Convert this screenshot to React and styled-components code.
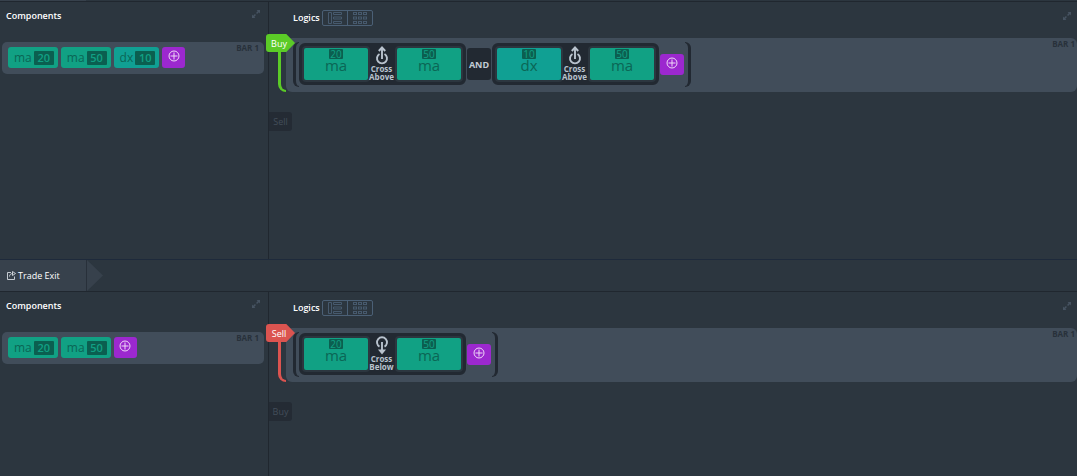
import React from "react";
import styled, { createGlobalStyle } from "styled-components";

const GlobalStyle = createGlobalStyle`
  * { box-sizing: border-box; }
  body {
    margin: 0;
    background: #2c363f;
    color: #fff;
    font-family: "Open Sans", "Noto Sans", sans-serif;
    font-size: 9px;
    overflow-x: hidden;
  }
  button {
    border: 0;
    margin: 0;
    padding: 0;
    font: inherit;
    color: inherit;
    background: none;
    cursor: pointer;
  }
`;

const TabEdge = styled.div`
  height: 1px;
  width: 86px;
  background: #37414c;
`;

const Section = styled.section`
  display: grid;
  grid-template-columns: 269px minmax(0, 1fr);
  min-height: ${(p) => p.$height}px;
  border-top: 1px solid #20272f;
`;

const TabBar = styled.nav`
  display: flex;
  height: 32px;
  border-top: 1px solid #1e2a3b;
`;

const Tab = styled.button`
  display: flex;
  align-items: center;
  gap: 2px;
  width: 87px;
  padding-left: 7px;
  background: #37414c;
  border-right: 1px solid #28303a;
  font-size: 9px;
`;

const TabArrow = styled.svg`
  display: block;
  width: 16px;
  height: 31px;
`;

const ComponentsPanel = styled.div`
  border-right: 1px solid #20272f;
  padding: 0 4px 0 2px;
`;

const PanelHeader = styled.header`
  display: flex;
  align-items: flex-start;
  height: ${(p) => p.$height}px;
  padding: ${(p) => p.$pad};
`;

const Title = styled.h2`
  margin: 0;
  font-size: 9px;
  line-height: 12px;
  font-weight: 600;
`;

const ExpandButton = styled.button`
  margin-left: auto;
  height: 8px;
  color: #465361;
  svg { display: block; }
`;

const BarLabel = styled.span`
  margin-left: auto;
  font-size: 8px;
  line-height: 10px;
  font-weight: 700;
  color: #28313a;
`;

const ComponentBar = styled.div`
  display: flex;
  gap: 3px;
  height: 32px;
  padding: 5px 5px 0 6px;
  border-radius: 5px;
  background: #414d5a;
  ${BarLabel} { margin-top: -4px; }
`;

const chipColor = { ma: "#11a184", dx: "#10a093" };

const Chip = styled.button`
  display: flex;
  align-items: center;
  gap: 2px;
  height: 21px;
  padding: 0 4px 0 6px;
  border-radius: 3px;
  background: ${(p) => chipColor[p.$kind]};
  color: #0b6655;
  font-size: 12px;
  line-height: 20px;
`;

const ChipValue = styled.span`
  width: 20px;
  height: 14px;
  border-radius: 1px;
  background: #0b5f50;
  color: #11a184;
  font-size: 11px;
  line-height: 14px;
  font-weight: 600;
  text-align: center;
`;

const AddButton = styled.button`
  display: flex;
  justify-content: center;
  width: 23px;
  height: 21px;
  padding-top: 3px;
  border-radius: 3px;
  background: #9c28cf;
  color: #f0d8f8;
`;

const LogicsPanel = styled.div`
  min-width: 0;
`;

const Toggle = styled.div`
  display: flex;
  margin: -2px 0 0 2px;
  border: 1px solid #4b6076;
  border-radius: 2px;
`;

const ToggleButton = styled.button`
  width: 24px;
  height: 14px;
  color: #475a6e;
  & + & {
    width: 25px;
    border-left: 1px solid #4b6076;
  }
  svg { display: block; margin: 0 auto; }
`;

const LogicLine = styled.div`
  position: relative;
  display: flex;
  padding-left: 9px;
`;

const Rail = styled.div`
  width: 8px;
  margin-top: 10px;
  border: solid ${(p) => p.$color};
  border-width: 0 0 2px 3px;
  border-bottom-left-radius: 8px;
`;

const LogicBar = styled.div`
  flex: 1;
  display: flex;
  align-items: center;
  height: 54px;
  padding: 0 2px 2px 7px;
  border-radius: 6px;
  background: #414d5a;
  ${BarLabel} {
    align-self: flex-start;
    margin-top: 1px;
  }
`;

const Tag = styled.button`
  position: absolute;
  top: -4px;
  left: -3px;
  width: 29px;
  height: 18px;
  padding-right: 3px;
  border-radius: 3px;
  background: ${(p) => p.$color};
  clip-path: polygon(0 0, 70% 0, 100% 50%, 70% 100%, 0 100%);
  font-size: 9px;
  line-height: 17px;
`;

const Bracket = styled.div`
  width: 6px;
  height: 45px;
  border: solid #222932;
  ${(p) =>
    p.$side === "left"
      ? "border-width: 1px 0 1px 3px; border-radius: 6px 0 0 6px;"
      : "border-width: 1px 3px 1px 0; border-radius: 0 6px 6px 0; margin-left: 1px;"}
`;

const Group = styled.div`
  display: flex;
  border: 3px solid #222932;
  border-radius: 6px;
  height: 42px;
  background: #222932;
`;

const Tile = styled.button`
  display: flex;
  flex-direction: column;
  align-items: center;
  width: 68px;
  height: 36px;
  padding-top: 1px;
  border: 2px solid #2c363f;
  border-radius: 4px;
  background: ${(p) => chipColor[p.$kind]};
  color: #0b6655;
  font-size: 15px;
  line-height: 12px;
`;

const TileValue = styled.span`
  width: 14px;
  height: 10px;
  border-radius: 1px;
  background: #0b5f50;
  color: #11a184;
  font-size: 10px;
  line-height: 10px;
`;

const Operator = styled.button`
  display: flex;
  flex-direction: column;
  align-items: center;
  width: 25px;
  padding-right: 2px;
  color: #b9c3ce;
  font-size: 8px;
  line-height: 8px;
  font-weight: 700;
  white-space: nowrap;
  svg { display: block; flex: none; }
`;

const Joiner = styled.button`
  width: 24px;
  height: 32px;
  margin: 0 1px;
  border-radius: 3px;
  background: #222932;
  color: #c3ccd6;
  font-size: 9px;
  font-weight: 700;
`;

const GroupAdd = styled(AddButton)`
  width: 24px;
  margin: 1px 0 0 1px;
`;

const GhostTab = styled.button`
  width: 23px;
  height: 19px;
  margin-top: 20px;
  border-radius: 0 3px 3px 0;
  background: #242b34;
  color: #434e5a;
  font-size: 9px;
  line-height: 18px;
`;

function ExpandIcon() {
  return (
    <svg width="8" height="8" viewBox="0 0 8 8" fill="currentColor" aria-hidden="true">
      <path d="M4.6 0H8v3.4L6.8 2.3 5.1 4 4 2.9l1.7-1.7zM3.4 8H0V4.6l1.2 1.1L2.9 4 4 5.1 2.3 6.8z" />
    </svg>
  );
}

function PlusIcon() {
  return (
    <svg width="12" height="12" viewBox="0 0 12 12" fill="none" stroke="currentColor" aria-hidden="true">
      <circle cx="6" cy="6" r="5" />
      <path d="M6 2.5v7M2.5 6h7" />
    </svg>
  );
}

function ListIcon() {
  return (
    <svg width="14" height="14" viewBox="0 0 14 14" fill="none" stroke="currentColor" aria-hidden="true">
      <path d="M.5 1.5h3v11h-3zM5.500 1.500h8v2h-8zM5.500 6h8v2h-8zM5.500 10.500h8v2h-8z" />
    </svg>
  );
}

function GridIcon() {
  return (
    <svg width="14" height="14" viewBox="0 0 14 14" fill="none" stroke="currentColor" aria-hidden="true">
      {[1.5, 6, 10.5].map((y) =>
        [0.5, 5.5, 10.5].map((x) => <rect key={`${x}-${y}`} x={x} y={y} width="3" height="2" />)
      )}
    </svg>
  );
}

function CrossIcon({ direction }) {
  return (
    <svg width="14" height="19" viewBox="0 0 14 19" fill="none" stroke="currentColor" strokeWidth="1.9" aria-hidden="true">
      {direction === "Above" ? (
        <>
          <path d="M4.500 8A5 5 0 1 0 9.500 8M7 13V2" />
          <path d="M3.800 5 7 1.500 10.200 5" />
        </>
      ) : (
        <>
          <path d="M4.500 10.600A5 5 0 1 1 9.500 10.600M7 6v10" />
          <path stroke="none" fill="currentColor" d="M3 13.500h8L7 18.500z" />
        </>
      )}
    </svg>
  );
}

function ExitIcon() {
  return (
    <svg width="9" height="9" viewBox="0 0 9 9" fill="none" stroke="#d5dae0" strokeWidth="0.9" aria-hidden="true">
      <path d="M4 1.500H.5v7h7V5.500M2.500 5.500C2.500 3.500 4 2.500 6 2.500M5.500.5l3 2-3 2z" />
    </svg>
  );
}

function LogicGroup({ left, right, direction }) {
  return (
    <Group>
      <Tile $kind={left[0]}>
        <TileValue>{left[1]}</TileValue>
        {left[0]}
      </Tile>
      <Operator>
        <CrossIcon direction={direction} />
        <span>Cross</span>
        <span>{direction}</span>
      </Operator>
      <Tile $kind={right[0]}>
        <TileValue>{right[1]}</TileValue>
        {right[0]}
      </Tile>
    </Group>
  );
}

function Strategy({ height, components, action, color, other, groups }) {
  return (
    <Section $height={height}>
      <ComponentsPanel>
        <PanelHeader $height={40} $pad="8px 4px 0 4px">
          <Title>Components</Title>
          <ExpandButton aria-label="Expand components">
            <ExpandIcon />
          </ExpandButton>
        </PanelHeader>
        <ComponentBar>
          {components.map(([kind, value]) => (
            <Chip key={kind + value} $kind={kind}>
              {kind}
              <ChipValue>{value}</ChipValue>
            </Chip>
          ))}
          <AddButton aria-label="Add component">
            <PlusIcon />
          </AddButton>
          <BarLabel>BAR 1</BarLabel>
        </ComponentBar>
      </ComponentsPanel>
      <LogicsPanel>
        <PanelHeader $height={36} $pad="10px 6px 0 24px">
          <Title>Logics</Title>
          <Toggle>
            <ToggleButton aria-label="List view">
              <ListIcon />
            </ToggleButton>
            <ToggleButton aria-label="Grid view">
              <GridIcon />
            </ToggleButton>
          </Toggle>
          <ExpandButton aria-label="Expand logics">
            <ExpandIcon />
          </ExpandButton>
        </PanelHeader>
        <LogicLine>
          <Rail $color={color} />
          <LogicBar>
            <Bracket $side="left" />
            {groups.map((group, i) => (
              <React.Fragment key={i}>
                {i > 0 && <Joiner>AND</Joiner>}
                <LogicGroup {...group} />
              </React.Fragment>
            ))}
            <GroupAdd aria-label="Add condition">
              <PlusIcon />
            </GroupAdd>
            <Bracket $side="right" />
            <BarLabel>BAR 1</BarLabel>
          </LogicBar>
          <Tag $color={color}>{action}</Tag>
        </LogicLine>
        <GhostTab>{other}</GhostTab>
      </LogicsPanel>
    </Section>
  );
}

export default function App() {
  return (
    <>
      <GlobalStyle />
      <TabEdge />
      <main>
        <Strategy
          height={258}
          components={[["ma", 20], ["ma", 50], ["dx", 10]]}
          action="Buy"
          color="#5bcb27"
          other="Sell"
          groups={[
            { left: ["ma", 20], right: ["ma", 50], direction: "Above" },
            { left: ["dx", 10], right: ["ma", 50], direction: "Above" },
          ]}
        />
        <TabBar>
          <Tab>
            <ExitIcon />
            Trade Exit
          </Tab>
          <TabArrow viewBox="0 0 16 31" aria-hidden="true">
            <path d="M0 0 16 15.500 0 31z" fill="#37414c" />
          </TabArrow>
        </TabBar>
        <Strategy
          height={185}
          components={[["ma", 20], ["ma", 50]]}
          action="Sell"
          color="#db5450"
          other="Buy"
          groups={[{ left: ["ma", 20], right: ["ma", 50], direction: "Below" }]}
        />
      </main>
    </>
  );
}
